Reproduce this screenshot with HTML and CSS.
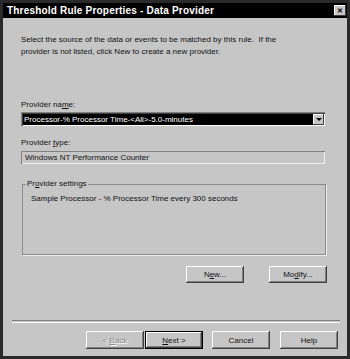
FILE: index.html
```html
<!DOCTYPE html>
<html lang="en">
<head>
    <meta charset="UTF-8">
    <title>Threshold Rule Properties - Data Provider</title>
    <link rel="stylesheet" href="styles.css">
</head>
<body>
    <div class="window">
        <div class="titlebar">
            <span class="title">Threshold Rule Properties - Data Provider</span>
            <span class="close">&#x2715;</span>
        </div>
        <div class="page">
            <p class="intro">Select the source of the data or events to be matched by this rule.&nbsp; If the provider is not listed, click New to create a new provider.</p>

            <div class="label">Provider na<u>m</u>e:</div>
            <div class="combo">
                <div class="combo-value">Processor-% Processor Time-&lt;All&gt;-5.0-minutes</div>
                <div class="combo-btn"><span class="arrow"></span></div>
            </div>

            <div class="label label-type">Provider <u>t</u>ype:</div>
            <div class="field">Windows NT Performance Counter</div>

            <fieldset class="group">
                <legend>Pr<u>o</u>vider settings</legend>
                <div class="group-body">Sample Processor - % Processor Time every 300 seconds</div>
            </fieldset>

            <div class="actions">
                <button class="btn">N<u>e</u>w...</button>
                <button class="btn">Mo<u>d</u>ify...</button>
            </div>
        </div>
        <div class="footer">
            <div class="separator"></div>
            <div class="wizard-buttons">
                <button class="btn btn-disabled">&lt; <u>B</u>ack</button>
                <button class="btn btn-default"><u>N</u>ext &gt;</button>
                <button class="btn btn-cancel">Cancel</button>
                <button class="btn btn-help">Help</button>
            </div>
        </div>
    </div>
</body>
</html>
```

FILE: styles.css
```css
body {
    margin: 0;
    background-color: #c6c6c6;
    font-family: "Liberation Sans", Arial, sans-serif;
    font-size: 8px;
    color: #111;
}
.window {
    width: 350px;
    height: 359px;
    box-sizing: border-box;
    border: 3px solid #2a2a2a;
    background-color: #c6c6c6;
    display: flex;
    flex-direction: column;
}
.titlebar {
    height: 15px;
    background-color: #000;
    color: #fff;
    display: flex;
    align-items: center;
    justify-content: space-between;
    padding: 0 1px 0 4px;
}
.title {
    font-size: 10px;
    font-weight: bold;
    letter-spacing: 0.2px;
}
.close {
    width: 12px;
    height: 11px;
    box-sizing: border-box;
    background-color: #c6c6c6;
    color: #000;
    font-size: 7px;
    font-weight: bold;
    line-height: 11px;
    text-align: center;
    box-shadow: inset -1px -1px #404040, inset 1px 1px #fff;
}
.page {
    flex: 1;
    padding: 16px 22px 0 18px;
}
.intro {
    margin: 0;
    line-height: 12px;
    width: 285px;
}
.label {
    margin-top: 41px;
    line-height: 12px;
}
.label-type {
    margin-top: 11px;
}
.combo {
    margin-top: 1px;
    height: 14px;
    box-sizing: border-box;
    display: flex;
    padding: 2px 1px 1px 2px;
    background-color: #fff;
    box-shadow: inset 1px 1px #808080, inset 2px 2px #404040;
}
.combo-value {
    flex: 1;
    background-color: #000;
    color: #fff;
    line-height: 11px;
    padding-left: 1px;
}
.combo-btn {
    width: 11px;
    background-color: #c6c6c6;
    box-shadow: inset -1px -1px #404040, inset 1px 1px #fff;
    display: flex;
    align-items: center;
    justify-content: center;
}
.arrow {
    width: 0;
    height: 0;
    border-left: 3px solid transparent;
    border-right: 3px solid transparent;
    border-top: 3px solid #000;
}
.field {
    margin-top: 2px;
    height: 13px;
    box-sizing: border-box;
    padding-left: 4px;
    line-height: 13px;
    box-shadow: inset 1px 1px #808080, inset -1px -1px #eee;
}
.group {
    margin: 14px 0 0 1px;
    width: 304px;
    box-sizing: border-box;
    padding: 0 4px 0 3px;
    border: 1px solid #8c8c8c;
    box-shadow: 1px 1px #eee;
}
.group legend {
    padding: 0 1px;
    line-height: 12px;
}
.group-body {
    margin-left: 5px;
    padding-top: 3px;
    height: 61px;
    line-height: 12px;
}
.actions {
    display: flex;
    justify-content: flex-end;
    gap: 25px;
    margin: 11px -2px 0 0;
}
.btn {
    width: 58px;
    height: 17px;
    padding: 0;
    border: none;
    background-color: #c6c6c6;
    font-family: "Liberation Sans", Arial, sans-serif;
    font-size: 8px;
    color: #111;
    box-shadow: inset -1px -1px #404040, inset 1px 1px #fff, inset -2px -2px #808080;
}
.footer {
    padding: 0 9px 7px 9px;
}
.separator {
    height: 1px;
    border-top: 1px solid #808080;
    border-bottom: 1px solid #fff;
    margin-right: -2px;
    margin-bottom: 8px;
}
.wizard-buttons {
    display: flex;
    justify-content: flex-end;
}
.wizard-buttons .btn {
    height: 18px;
}
.btn-disabled {
    color: #8a8a8a;
    text-shadow: 1px 1px #fff;
}
.btn-default {
    margin-left: 1px;
    box-shadow: inset 0 0 0 1px #000, inset -2px -2px #404040, inset 2px 2px #fff, inset -3px -3px #808080;
}
.btn-cancel {
    margin-left: 9px;
}
.btn-help {
    margin-left: 10px;
}
```
